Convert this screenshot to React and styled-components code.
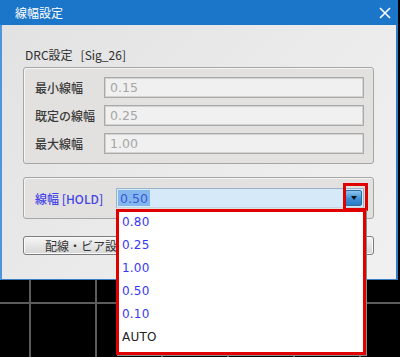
import React from 'react';
import styled, { createGlobalStyle } from 'styled-components';

const GlobalStyle = createGlobalStyle`
	html, body {
		margin: 0;
		padding: 0;
		background: #000;
	}
	* {
		box-sizing: border-box;
	}
`;

const FONT = `"DejaVu Sans", "Noto Sans CJK JP", sans-serif`;

const Screen = styled.div`
	position: relative;
	width: 400px;
	height: 357px;
	display: flex;
	flex-direction: column;
	overflow: hidden;
	font-family: ${FONT};
	font-size: 12px;
`;

const Dialog = styled.div`
	height: 280px;
	width: 398px;
	display: flex;
	flex-direction: column;
	border-left: 2px solid #4d95dc;
	border-right: 2px solid #2f7bc9;
	border-bottom: 1px solid #3a7fc6;
`;

const TitleBar = styled.div`
	height: 25px;
	margin: 0 -2px;
	display: flex;
	align-items: center;
	justify-content: space-between;
	padding: 0 7px 0 15px;
	background: #1b75c8;
	color: #fff;
	font-family: "Noto Sans CJK JP", sans-serif;
	font-size: 12px;
`;

const Body = styled.div`
	flex: 1;
	padding: 22px 22px 0 21px;
	background: linear-gradient(135deg, #e2e2e2 0%, #ececec 60%, #f0f0f0 100%);
	color: #333;
`;

const SectionTitle = styled.div`
	height: 20px;
	line-height: 16px;
	padding-left: 2px;
	font-family: "Noto Sans CJK JP", sans-serif;
	font-size: 12px;
	color: #2e2e2e;
	white-space: pre;
`;

const GroupBox = styled.div`
	border: 1px solid #a6a6a6;
	border-radius: 3px;
	background: #e3e1df;
	padding: ${p => p.$pad};
	display: flex;
	flex-direction: column;
	gap: 7px;
	margin-top: ${p => p.$top || 0}px;
	box-shadow: inset 1px 1px 0 #f4f4f4;
`;

const Row = styled.div`
	display: flex;
	align-items: center;
	padding-left: 11px;
	padding-right: 9px;
`;

const Label = styled.span`
	width: ${p => p.$w}px;
	flex: none;
	font-family: "Noto Sans CJK JP", sans-serif;
	font-size: 12px;
	color: ${p => p.$color || '#3a3a3a'};
	font-weight: 500;
`;

const Field = styled.div`
	flex: 1;
	height: 21px;
	display: flex;
	align-items: center;
	padding-left: 5px;
	background: #f0f0f0;
	border: 1px solid #a9a9a9;
	box-shadow: inset 0 0 0 1px #d2d2d2;
	color: #a6a6a6;
	font-family: ${FONT};
	font-size: 12.5px;
`;

const Combo = styled.div`
	flex: 1;
	height: 20px;
	display: flex;
	align-items: stretch;
	padding: 1px;
	background: #d6e9f9;
	border: 1px solid #9ab3c9;
	border-bottom-color: #c4d6e6;
`;

const Selected = styled.span`
	display: flex;
	align-items: center;
	padding: 0 2px;
	background: #84b7ee;
	color: #3b57d6;
	font-size: 12.5px;
`;

const DropButton = styled.div`
	margin-left: auto;
	width: 17px;
	display: flex;
	align-items: center;
	justify-content: center;
	background: linear-gradient(#8cc3ef, #3c8fd6 55%, #2b7cc6);
	border: 1px solid #2f6aa3;
	border-radius: 2px;
`;

const Arrow = styled.span`
	width: 0;
	height: 0;
	border-left: 3.5px solid transparent;
	border-right: 3.5px solid transparent;
	border-top: 4px solid #111;
`;

const ButtonRow = styled.div`
	display: flex;
	gap: 10px;
	margin-top: 17px;
`;

const Button = styled.div`
	flex: 1;
	height: 19px;
	display: flex;
	align-items: center;
	padding-left: 21px;
	border: 1px solid #7c7c7c;
	border-radius: 3px;
	background: linear-gradient(#f6f6f6, #e6e6e6 50%, #d6d6d6);
	box-shadow: inset 0 0 0 1px #fafafa;
	font-family: "Noto Sans CJK JP", sans-serif;
	font-size: 12px;
	color: #333;
	white-space: nowrap;
`;

const Canvas = styled.div`
	flex: 1;
	background-color: #000;
	background-image:
		linear-gradient(to right, #5c5c5c 2px, transparent 2px),
		linear-gradient(to bottom, #5c5c5c 2px, transparent 2px);
	background-size: 66px 66px;
	background-position: 29px 22px;
`;

const Highlight = styled.div`
	position: absolute;
	left: 343px;
	top: 183px;
	width: 25px;
	height: 28px;
	border: 3px solid #e00000;
`;

const ListBox = styled.div`
	position: absolute;
	left: 116px;
	top: 209px;
	width: 250px;
	height: 146px;
	background: #fff;
	border: 3px solid #e00000;
	box-shadow: 1px 1px 0 #8a8a8a;
`;

const Option = styled.div`
	height: 23px;
	display: flex;
	align-items: center;
	padding: 0 0 3px 3px;
	color: ${p => p.$auto ? '#222' : '#3838f2'};
	font-size: 12px;
	letter-spacing: 0.2px;
`;

const CloseIcon = () => (
	<svg width="12" height="12" viewBox="0 0 12 12">
		<path d="M1 1 L11 11 M11 1 L1 11" stroke="#fff" strokeWidth="1.6" />
	</svg>
);

const App = () => {
	const drc = [
		{ label: '最小線幅', value: '0.15' },
		{ label: '既定の線幅', value: '0.25' },
		{ label: '最大線幅', value: '1.00' },
	];
	const options = ['0.80', '0.25', '1.00', '0.50', '0.10', 'AUTO'];
	return (
		<Screen>
			<GlobalStyle />
			<Dialog>
				<TitleBar>
					<span>線幅設定</span>
					<CloseIcon />
				</TitleBar>
				<Body>
					<SectionTitle>DRC設定   [Sig_26]</SectionTitle>
					<GroupBox $pad="9px 0 9px">
						{drc.map(item => (
							<Row key={item.label}>
								<Label $w={69}>{item.label}</Label>
								<Field>{item.value}</Field>
							</Row>
						))}
					</GroupBox>
					<GroupBox $pad="10px 0 10px" $top={13}>
						<Row>
							<Label $w={81} $color="#4646e6">線幅 [HOLD]</Label>
							<Combo>
								<Selected>0.50</Selected>
								<DropButton><Arrow /></DropButton>
							</Combo>
						</Row>
					</GroupBox>
					<ButtonRow>
						<Button>配線・ビア設定</Button>
						<Button />
					</ButtonRow>
				</Body>
			</Dialog>
			<Canvas />
			<Highlight />
			<ListBox>
				{options.map(opt => (
					<Option key={opt} $auto={opt === 'AUTO'}>{opt}</Option>
				))}
			</ListBox>
		</Screen>
	);
};

export default App;
